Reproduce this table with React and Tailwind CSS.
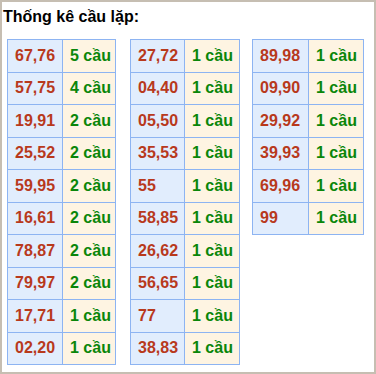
import React from "react";

const cols = [
  [["67,76", 5], ["57,75", 4], ["19,91", 2], ["25,52", 2], ["59,95", 2], ["16,61", 2], ["78,87", 2], ["79,97", 2], ["17,71", 1], ["02,20", 1]],
  [["27,72", 1], ["04,40", 1], ["05,50", 1], ["35,53", 1], ["55", 1], ["58,85", 1], ["26,62", 1], ["56,65", 1], ["77", 1], ["38,83", 1]],
  [["89,98", 1], ["09,90", 1], ["29,92", 1], ["39,93", 1], ["69,96", 1], ["99", 1]],
];

function T({ rows, tw, w1 }) {
  return (
    <table className={`border-collapse table-fixed ${tw}`}>
      <colgroup>
        <col className={w1} />
        <col />
      </colgroup>
      <tbody>
        {rows.map(([a, n], i) => (
          <tr key={i} className="h-[32.5px]">
            <td className="border border-[#8db4f2] bg-[#e1edfd] pl-[7px] text-[#b8391c]">{a}</td>
            <td className="border border-[#8db4f2] bg-[#fef4e2] pl-[7px] text-[#0a860a]">{n} cầu</td>
          </tr>
        ))}
      </tbody>
    </table>
  );
}

export default function App() {
  return (
    <div
      className="w-[376px] h-[374px] border-2 border-[#c6beb2] bg-white"
      style={{ fontFamily: '"Liberation Sans", Arial, sans-serif' }}
    >
      <div className="pl-[1px] pt-[6px] text-[16px] font-bold leading-[18px] text-black">Thống kê cầu lặp:</div>
      <div className="flex items-start pl-[5px] pt-[13px] text-[16px] font-bold leading-[18px]">
        <T rows={cols[0]} tw="w-[109px]" w1="w-[55px]" />
        <div className="w-[14px] shrink-0" />
        <T rows={cols[1]} tw="w-[110px]" w1="w-[54px]" />
        <div className="w-[12px] shrink-0" />
        <T rows={cols[2]} tw="w-[112px]" w1="w-[56px]" />
      </div>
    </div>
  );
}
